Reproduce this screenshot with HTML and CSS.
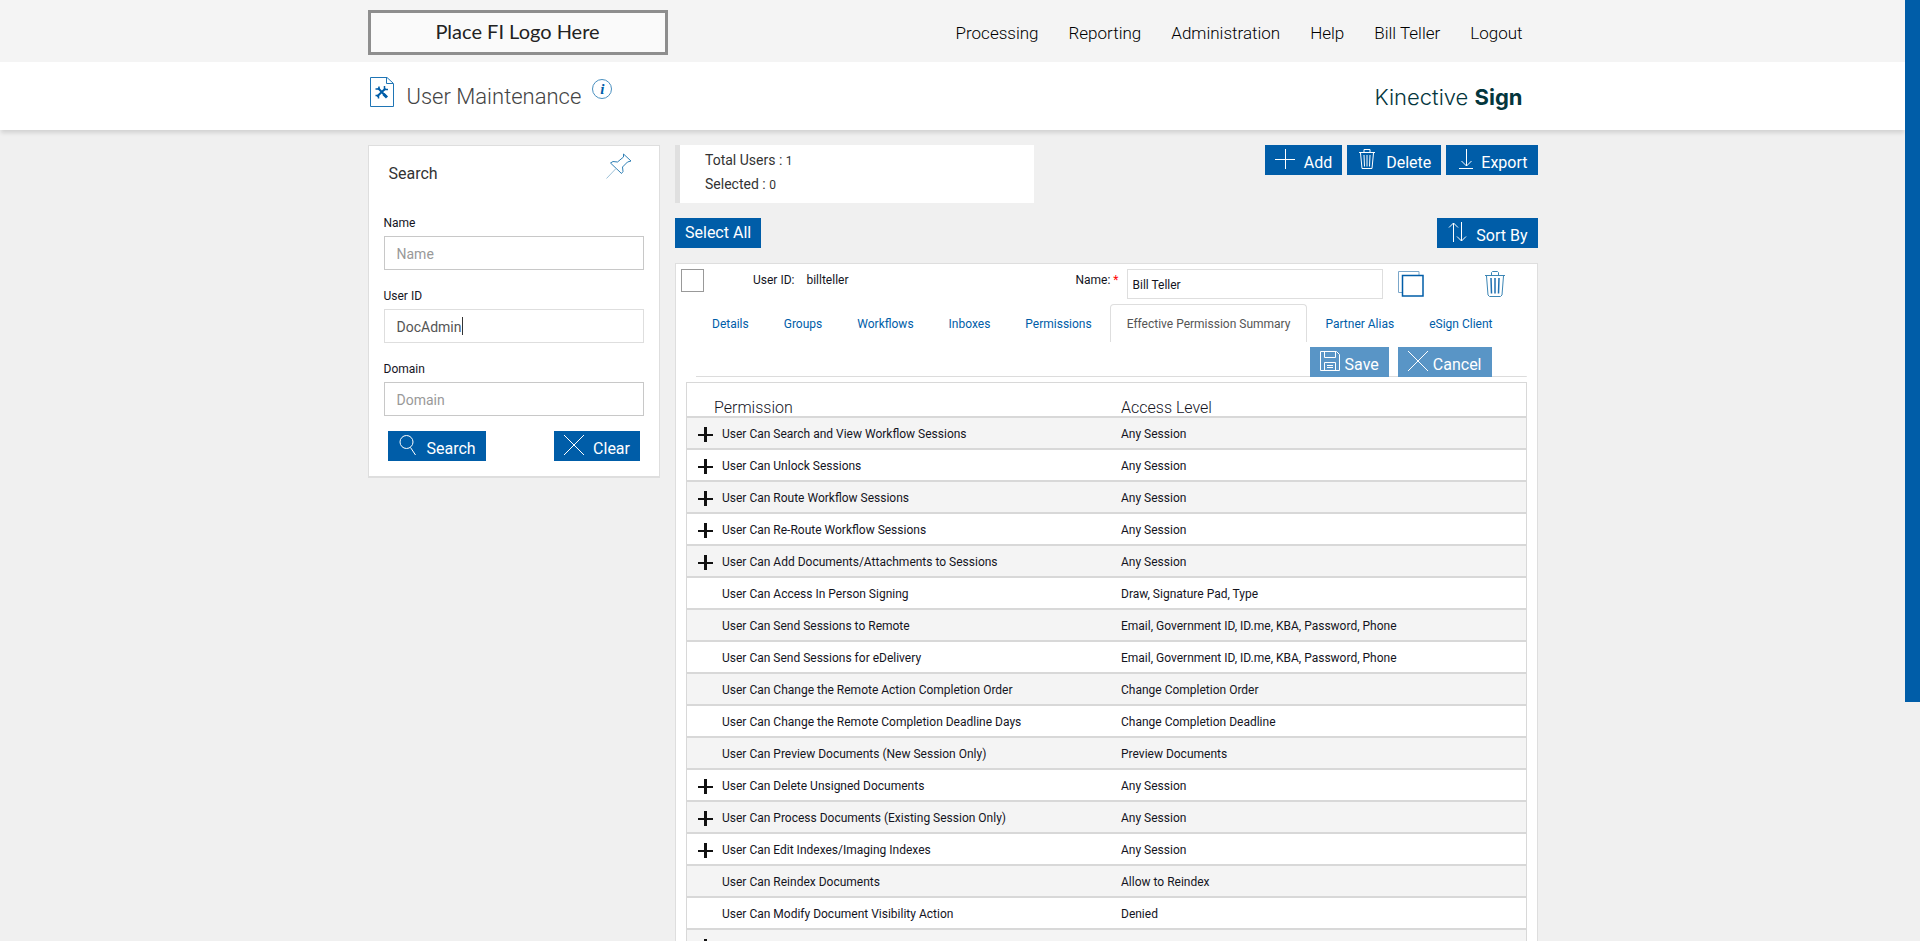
FILE: index.html
```html
<!DOCTYPE html>
<html lang="en">
<head>
  <meta charset="UTF-8">
  <meta name="viewport" content="width=device-width, initial-scale=1.0">
  <title>User Maintenance</title>
  <link rel="stylesheet" href="styles.css">
</head>
<body>
  <header class="top-bar">
    <div class="container top-inner">
      <div class="fi-logo">Place FI Logo Here</div>
      <nav class="main-nav">
        <a href="#">Processing</a>
        <a href="#">Reporting</a>
        <a href="#">Administration</a>
        <a href="#">Help</a>
        <a href="#">Bill Teller</a>
        <a href="#">Logout</a>
      </nav>
    </div>
  </header>

  <div class="title-bar">
    <div class="container title-inner">
      <svg class="page-icon" width="24" height="30" viewBox="0 0 24 30" fill="none" stroke="#1f75b5">
        <path d="M.5 .5H17L23.5 6.5V29.5H.5zM16.5 .5V6.5H23"/>
        <g stroke="#005da8">
          <path d="M8 11L16 19.5M15.500 11.500L7 19.500" stroke-width="2"/>
          <path d="M5.500 12H9V9.500M14.500 9V12.500H18M5.500 18.500H8.500V21.500" stroke-width="1.500"/>
          <path d="M13.500 17L17 20.500" stroke-width="3"/>
        </g>
      </svg>
      <h1>User Maintenance</h1>
      <a class="info" href="#" aria-label="Information"><i>i</i></a>
      <div class="brand">Kinective <b>Sign</b></div>
    </div>
  </div>

  <main class="container content">
    <form class="search-panel">
      <div class="search-head">
        <h2>Search</h2>
        <svg width="26" height="26" viewBox="0 0 26 26" fill="none" stroke="#2f7fb5">
          <path d="M17.5 1L25 8L21.500 9L16.500 14L17 18.500L15.500 20.500L4.500 10L7 8.500L11.500 9L17.500 4z"/>
          <path d="M10 15.500L.5 25.500" stroke="#9cc0d8"/>
        </svg>
      </div>
      <div class="form-group">
        <label for="name">Name</label>
        <input type="text" id="name" placeholder="Name">
      </div>
      <div class="form-group">
        <label for="userId">User ID</label>
        <div class="focused">
          <input type="text" id="userId" value="DocAdmin">
          <span class="caret"></span>
        </div>
      </div>
      <div class="form-group">
        <label for="domain">Domain</label>
        <input type="text" id="domain" placeholder="Domain">
      </div>
      <div class="search-buttons">
        <button type="button" class="btn">
          <svg width="20" height="20" viewBox="0 0 20 20"><circle cx="8.500" cy="7" r="6.500"/><path d="M12.500 12.500L17.500 20"/></svg>
          <span>Search</span>
        </button>
        <button type="button" class="btn">
          <svg width="20" height="20" viewBox="0 0 20 20"><path d="M0 0L20 20M20 0L0 20"/></svg>
          <span>Clear</span>
        </button>
      </div>
    </form>

    <section class="users">
      <div class="bar">
        <div class="totals">
          <div>Total Users : <small>1</small></div>
          <div>Selected : <small>0</small></div>
        </div>
        <div class="actions">
          <button type="button" class="btn">
            <svg width="20" height="20" viewBox="0 0 20 20"><path d="M10.500 0V20M0 10.500H20"/></svg>
            <span>Add</span>
          </button>
          <button type="button" class="btn">
            <svg width="20" height="20" viewBox="0 0 20 20"><path d="M2 3.500H18M7 3V.5H13V3M3.500 4L5 19.500H15L16.500 4M7 6L7.500 17.500M10 6V17.500M13 6L12.500 17.500"/></svg>
            <span>Delete</span>
          </button>
          <button type="button" class="btn tight">
            <svg width="20" height="20" viewBox="0 0 20 20"><path d="M10.500 0V17M5.500 12L10.500 17L15.500 12M3 19.500H17"/></svg>
            <span>Export</span>
          </button>
        </div>
      </div>

      <div class="bar">
        <button type="button" class="btn plain">Select All</button>
        <button type="button" class="btn">
          <svg width="20" height="20" viewBox="0 0 20 20"><path d="M6.500 20V1M2 5.500L6.500 1L11 5.500M14.500 0V19M10 14.500L14.500 19L19 14.500"/></svg>
          <span>Sort By</span>
        </button>
      </div>

      <article class="user-card">
        <div class="user-row">
          <input type="checkbox" class="pick" aria-label="Select billteller">
          <div class="user-id"><span>User ID:</span><span>billteller</span></div>
          <label for="fullName">Name: <em>*</em></label>
          <input type="text" id="fullName" class="full-name" value="Bill Teller">
          <div class="row-icons">
            <button type="button" class="icon-btn" aria-label="Copy">
              <svg width="26" height="26" viewBox="0 0 26 26" fill="none"><path d="M4 21.500H.5V.5H21V4" stroke="#7ba7ca"/><path d="M4.500 4.500H25V25H4.500z" stroke="#005da8" stroke-width="1.500"/></svg>
            </button>
            <button type="button" class="icon-btn" aria-label="Delete user">
              <svg width="22" height="26" viewBox="0 0 22 26" fill="none" stroke="#3c86b5"><path d="M1 4.500H21M7.500 4V1.500L8.500 .5H13.500L14.500 1.500V4M2.500 5L4 24L5.500 25.500H16.500L18 24L19.500 5"/><path d="M7 7L7.500 22.500M11 7V22.500M15 7L14.500 22.500" stroke="#1f6fb0" stroke-width="1.500"/></svg>
            </button>
          </div>
        </div>

        <nav class="tabs">
          <a href="#">Details</a>
          <a href="#">Groups</a>
          <a href="#">Workflows</a>
          <a href="#">Inboxes</a>
          <a href="#">Permissions</a>
          <a href="#" class="active">Effective Permission Summary</a>
          <a href="#">Partner Alias</a>
          <a href="#">eSign Client</a>
        </nav>

        <div class="save-bar">
          <button type="button" class="btn tight" disabled>
            <svg width="20" height="20" viewBox="0 0 20 20"><path d="M.5 .5H16.500L19.500 3.500V19.500H.5zM4.500 .5V6.500H15.500V.5M4.500 19.500V11.500H15.500V19.500M7 14.500H13M7 16.500H13"/></svg>
            <span>Save</span>
          </button>
          <button type="button" class="btn tight" disabled>
            <svg width="20" height="20" viewBox="0 0 20 20"><path d="M0 0L20 20M20 0L0 20"/></svg>
            <span>Cancel</span>
          </button>
        </div>

        <table class="permissions">
          <thead>
            <tr><th>Permission</th><th>Access Level</th></tr>
          </thead>
          <tbody>
            <tr><td><button type="button" class="expand" aria-label="Expand"></button>User Can Search and View Workflow Sessions</td><td>Any Session</td></tr>
            <tr><td><button type="button" class="expand" aria-label="Expand"></button>User Can Unlock Sessions</td><td>Any Session</td></tr>
            <tr><td><button type="button" class="expand" aria-label="Expand"></button>User Can Route Workflow Sessions</td><td>Any Session</td></tr>
            <tr><td><button type="button" class="expand" aria-label="Expand"></button>User Can Re-Route Workflow Sessions</td><td>Any Session</td></tr>
            <tr><td><button type="button" class="expand" aria-label="Expand"></button>User Can Add Documents/Attachments to Sessions</td><td>Any Session</td></tr>
            <tr><td>User Can Access In Person Signing</td><td>Draw, Signature Pad, Type</td></tr>
            <tr><td>User Can Send Sessions to Remote</td><td>Email, Government ID, ID.me, KBA, Password, Phone</td></tr>
            <tr><td>User Can Send Sessions for eDelivery</td><td>Email, Government ID, ID.me, KBA, Password, Phone</td></tr>
            <tr><td>User Can Change the Remote Action Completion Order</td><td>Change Completion Order</td></tr>
            <tr><td>User Can Change the Remote Completion Deadline Days</td><td>Change Completion Deadline</td></tr>
            <tr><td>User Can Preview Documents (New Session Only)</td><td>Preview Documents</td></tr>
            <tr><td><button type="button" class="expand" aria-label="Expand"></button>User Can Delete Unsigned Documents</td><td>Any Session</td></tr>
            <tr><td><button type="button" class="expand" aria-label="Expand"></button>User Can Process Documents (Existing Session Only)</td><td>Any Session</td></tr>
            <tr><td><button type="button" class="expand" aria-label="Expand"></button>User Can Edit Indexes/Imaging Indexes</td><td>Any Session</td></tr>
            <tr><td>User Can Reindex Documents</td><td>Allow to Reindex</td></tr>
            <tr><td>User Can Modify Document Visibility Action</td><td>Denied</td></tr>
            <tr><td><button type="button" class="expand" aria-label="Expand"></button></td><td></td></tr>
          </tbody>
        </table>
      </article>
    </section>
  </main>

  <div class="scroll-thumb"></div>
</body>
</html>
```

FILE: styles.css
```css
* {
  box-sizing: border-box;
}

body {
  margin: 0;
  padding-right: 15px;
  height: 100vh;
  overflow: hidden;
  background: #f0f0f0;
  color: #14141e;
  font-family: Roboto, "Liberation Sans", sans-serif;
  font-size: 12px;
  line-height: 20px;
}

a {
  color: #005da8;
  text-decoration: none;
}

h1, h2 {
  margin: 0;
}

button, input {
  font-family: inherit;
}

.container {
  max-width: 1170px;
  margin: 0 auto;
}

/* header */
.top-bar {
  background: #f4f4f4;
}

.top-inner {
  display: flex;
  justify-content: space-between;
  align-items: center;
  padding: 10px 15px 7px 0;
}

.fi-logo {
  width: 300px;
  padding: 2px 0 4px;
  border: 3px solid #8e8e8e;
  background: #fafafa;
  color: #222;
  font-family: Lato, sans-serif;
  font-size: 20px;
  line-height: 33px;
  text-align: center;
}

.main-nav {
  display: flex;
  gap: 30px;
}

.main-nav a {
  color: #000;
  font-size: 17px;
  font-weight: 300;
}

.title-bar {
  background: #fff;
  box-shadow: 0 4px 4px -1px rgba(0, 0, 0, 0.12);
}

.title-inner {
  display: flex;
  align-items: flex-start;
  padding: 15px 15px 15px 2px;
}

.page-icon {
  margin-right: 13px;
}

h1 {
  padding-top: 3px;
  color: #444;
  font-size: 22px;
  font-weight: 300;
  line-height: 34px;
}

.info {
  width: 20px;
  height: 20px;
  margin: 2px 0 0 11px;
  border: 1px solid #4a90c0;
  border-radius: 50%;
  font-family: "Liberation Serif", serif;
  font-size: 15px;
  font-weight: bold;
  line-height: 18px;
  text-align: center;
}

.brand {
  margin-left: auto;
  padding: 3px 0 1px;
  color: #04363d;
  font-family: Inter, sans-serif;
  font-size: 22px;
  font-weight: 300;
  line-height: 34px;
}

.brand b {
  font-weight: 700;
}

/* page body */
.content {
  display: flex;
  align-items: flex-start;
  gap: 15px;
  padding-top: 15px;
}

.search-panel {
  flex: 0 0 25%;
  padding: 7px 15px 15px;
  border: 1px solid #dedede;
  border-bottom-width: 2px;
  background: #fff;
}

.search-head {
  display: flex;
  justify-content: space-between;
  padding: 0 12px 0 5px;
}

h2 {
  padding-top: 11px;
  color: #333;
  font-size: 16px;
  font-weight: 400;
  line-height: 20px;
}

.form-group {
  padding-top: 16px;
}

.search-head + .form-group {
  padding-top: 29px;
}

.form-group label {
  display: block;
  padding-bottom: 3px;
}

.form-group input {
  display: block;
  width: 100%;
  padding: 7px 12px 5px;
  border: 1px solid #c8c8c8;
  background: #fff;
  color: #555;
  font-size: 14px;
  line-height: 20px;
}

.form-group input::placeholder {
  color: #999;
}

.focused {
  position: relative;
}

.form-group .focused input {
  border-color: #dedede;
}

/* text cursor after the typed value */
.caret {
  position: absolute;
  top: 8px;
  left: 78px;
  width: 1px;
  height: 18px;
  background: #333;
}

.search-buttons {
  display: flex;
  justify-content: space-between;
  padding: 15px 4px 0;
}

.btn {
  display: flex;
  align-items: flex-start;
  gap: 9px;
  padding: 4px 10px 0;
  border: 0;
  background: #005da8;
  color: #fff;
  font-size: 16px;
  font-weight: 400;
  line-height: 26px;
}

.btn span {
  padding-top: 2px;
  line-height: 24px;
}

.btn.tight {
  gap: 5px;
}

.btn.plain {
  padding: 2px 10px;
}

.btn svg {
  fill: none;
  stroke: #fff;
}

.btn:disabled {
  background: #5995c6;
}

.users {
  flex: 1;
}

.bar {
  display: flex;
  justify-content: space-between;
  align-items: flex-start;
  padding-bottom: 15px;
}

.totals {
  width: 359px;
  padding: 3px 25px 7px;
  border-left: 5px solid #e0e0e0;
  background: #fff;
  color: #333;
  font-size: 14px;
  line-height: 24px;
}

.totals small {
  font-size: 12px;
  line-height: 20px;
}

.actions {
  display: flex;
  gap: 5px;
}

/* user card */
.user-card {
  padding: 5px 10px 0;
  border: 1px solid #dedede;
  background: #fff;
}

.user-row {
  display: flex;
  align-items: flex-start;
}

.pick {
  appearance: none;
  width: 23px;
  height: 23px;
  margin: 0 0 0 -5px;
  border: 1px solid #999;
  background: #fff;
}

.user-id {
  display: flex;
  flex: 1;
  gap: 12px;
  padding: 1px 0 0 49px;
}

.user-row label {
  padding: 1px 8px 0 0;
}

.user-row em {
  color: #f00;
  font-style: normal;
}

.full-name {
  width: 256px;
  padding: 5px 5px 3px;
  border: 1px solid #dedede;
  color: #14141e;
  font-size: 12px;
  line-height: 20px;
}

.row-icons {
  display: flex;
  justify-content: space-between;
  padding: 2px 21px 0 15px;
  width: 144px;
}

.icon-btn {
  height: 26px;
  padding: 0;
  border: 0;
  background: none;
}

.tabs {
  display: flex;
  gap: 1px;
  padding: 5px 0 5px 9px;
}

.tabs a {
  padding: 9px 16px 8px;
  border: 1px solid transparent;
  border-bottom: 0;
  border-radius: 4px 4px 0 0;
}

.tabs .active {
  border-color: #dedede;
  color: #555;
}

.save-bar {
  display: flex;
  justify-content: flex-end;
  gap: 9px;
  margin-left: 10px;
  padding-right: 35px;
  background: linear-gradient(#dcdcdc, #dcdcdc) bottom / 100% 1px no-repeat;
}

.permissions {
  width: 100%;
  margin-top: 5px;
  border: 1px solid #d8d8d8;
  border-spacing: 0;
  table-layout: fixed;
}

.permissions th {
  padding: 16px 0 0 27px;
  font-size: 16px;
  font-weight: 300;
  line-height: 17px;
  text-align: left;
}

.permissions th:first-child {
  width: 434px;
}

.permissions th + th,
.permissions td + td {
  padding-left: 0;
}

.permissions td {
  padding: 6px 0 4px 35px;
  border-top: 2px solid #d8d8d8;
}

.permissions tbody tr:nth-child(odd) {
  background: #f4f4f4;
}

.expand {
  float: left;
  width: 15px;
  height: 15px;
  margin: 3px 0 0 -24px;
  padding: 0;
  border: 0;
  background:
    linear-gradient(#111, #111) center / 3px 15px no-repeat,
    linear-gradient(#111, #111) center / 15px 2px no-repeat;
}

/* page scrollbar */
.scroll-thumb {
  position: fixed;
  top: 0;
  right: 0;
  width: 15px;
  height: 74.6vh;
  background: #005da8;
}
```
